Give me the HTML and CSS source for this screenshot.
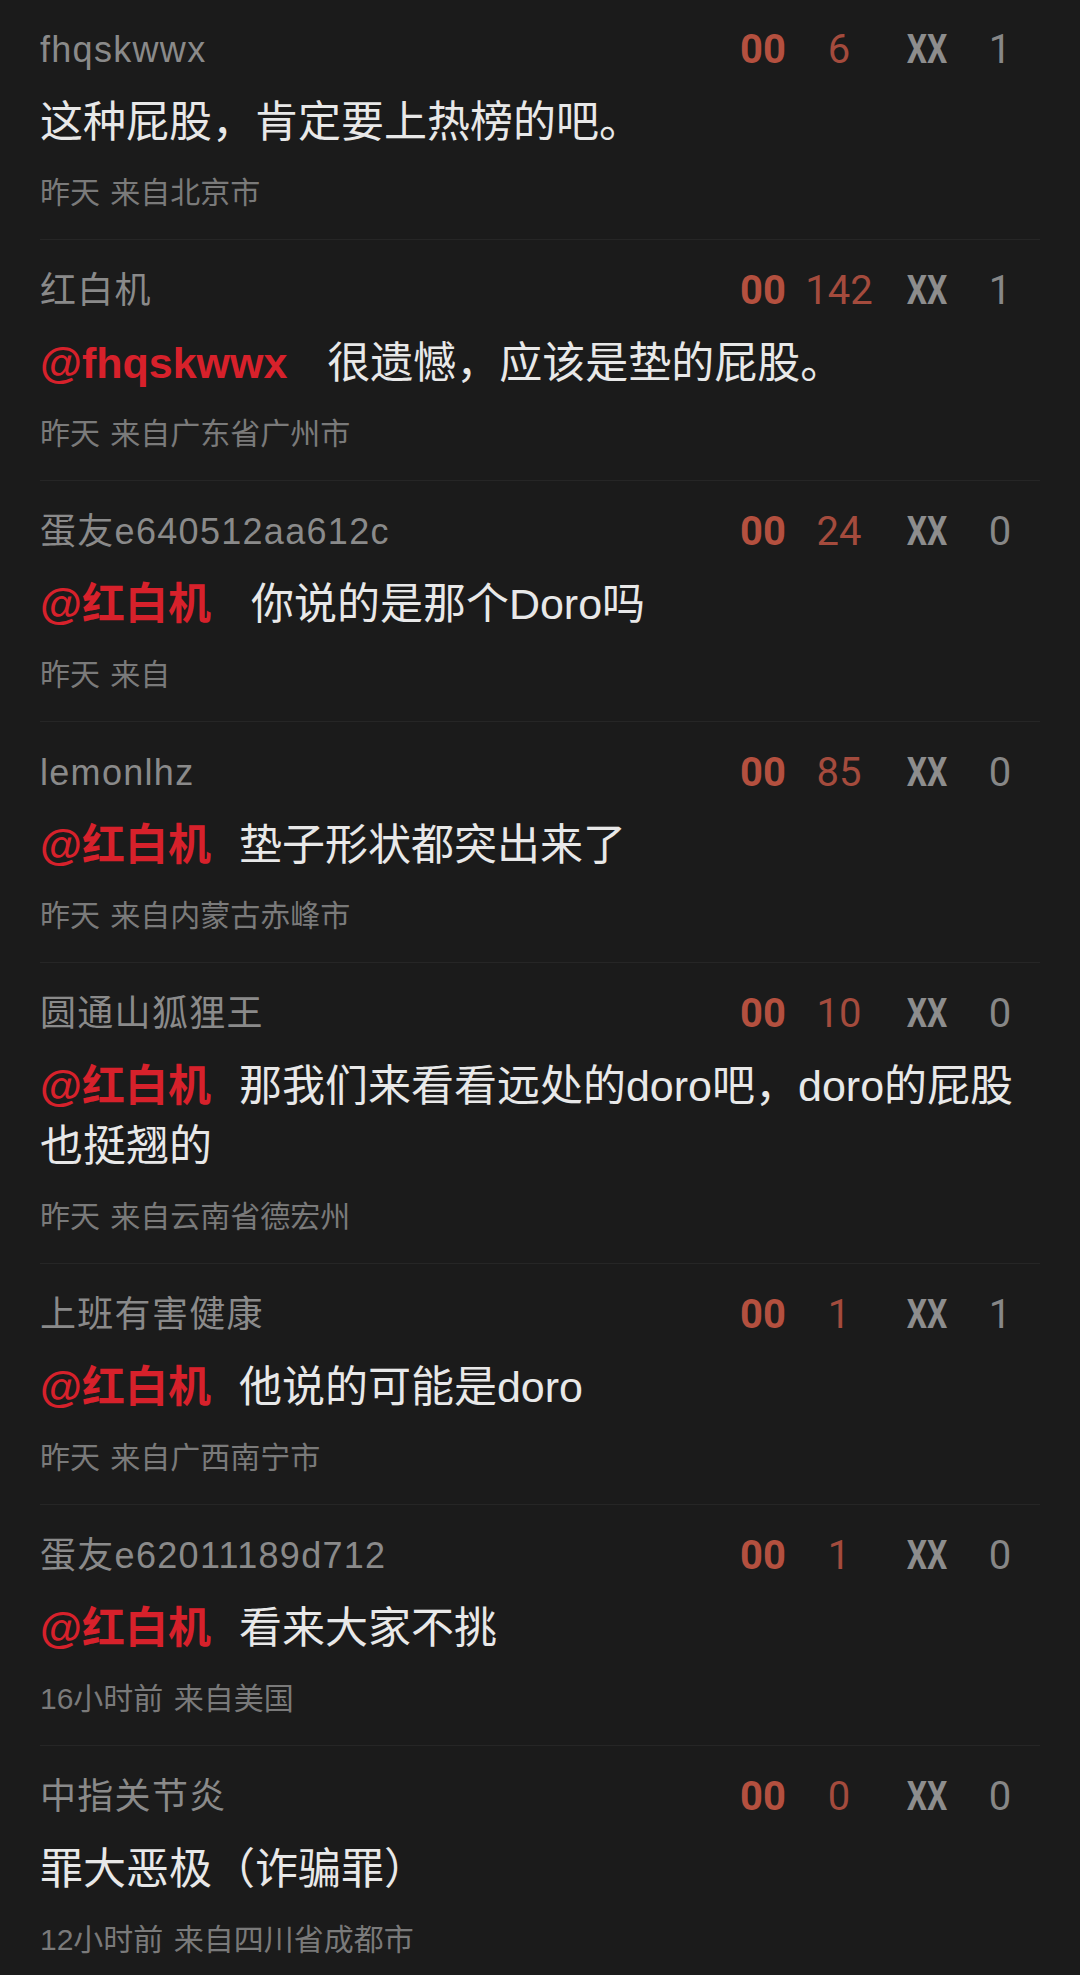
FILE: index.html
```html
<!DOCTYPE html>
<html lang="zh-CN">
<head>
<meta charset="utf-8">
<title>评论</title>
<link rel="stylesheet" href="styles.css">
</head>
<body>
<main class="list">
  <article class="comment">
    <div class="head">
      <span class="user">fhqskwwx</span>
      <div class="stats"><span class="oo">00</span><span class="up">6</span><span class="xx">XX</span><span class="down">1</span></div>
    </div>
    <p class="text">这种屁股，肯定要上热榜的吧。</p>
    <div class="meta">昨天 来自北京市</div>
  </article>
  <article class="comment">
    <div class="head">
      <span class="user">红白机</span>
      <div class="stats"><span class="oo">00</span><span class="up">142</span><span class="xx">XX</span><span class="down">1</span></div>
    </div>
    <p class="text"><span class="at">@fhqskwwx</span>&nbsp;很遗憾，应该是垫的屁股。</p>
    <div class="meta">昨天 来自广东省广州市</div>
  </article>
  <article class="comment">
    <div class="head">
      <span class="user">蛋友e640512aa612c</span>
      <div class="stats"><span class="oo">00</span><span class="up">24</span><span class="xx">XX</span><span class="down">0</span></div>
    </div>
    <p class="text"><span class="at">@红白机</span>&nbsp;你说的是那个Doro吗</p>
    <div class="meta">昨天 来自</div>
  </article>
  <article class="comment">
    <div class="head">
      <span class="user">lemonlhz</span>
      <div class="stats"><span class="oo">00</span><span class="up">85</span><span class="xx">XX</span><span class="down">0</span></div>
    </div>
    <p class="text"><span class="at">@红白机</span>垫子形状都突出来了</p>
    <div class="meta">昨天 来自内蒙古赤峰市</div>
  </article>
  <article class="comment">
    <div class="head">
      <span class="user">圆通山狐狸王</span>
      <div class="stats"><span class="oo">00</span><span class="up">10</span><span class="xx">XX</span><span class="down">0</span></div>
    </div>
    <p class="text"><span class="at">@红白机</span>那我们来看看远处的doro吧，doro的屁股<br>也挺翘的</p>
    <div class="meta">昨天 来自云南省德宏州</div>
  </article>
  <article class="comment">
    <div class="head">
      <span class="user">上班有害健康</span>
      <div class="stats"><span class="oo">00</span><span class="up">1</span><span class="xx">XX</span><span class="down">1</span></div>
    </div>
    <p class="text"><span class="at">@红白机</span>他说的可能是doro</p>
    <div class="meta">昨天 来自广西南宁市</div>
  </article>
  <article class="comment">
    <div class="head">
      <span class="user">蛋友e62011189d712</span>
      <div class="stats"><span class="oo">00</span><span class="up">1</span><span class="xx">XX</span><span class="down">0</span></div>
    </div>
    <p class="text"><span class="at">@红白机</span>看来大家不挑</p>
    <div class="meta">16小时前 来自美国</div>
  </article>
  <article class="comment">
    <div class="head">
      <span class="user">中指关节炎</span>
      <div class="stats"><span class="oo">00</span><span class="up">0</span><span class="xx">XX</span><span class="down">0</span></div>
    </div>
    <p class="text">罪大恶极（诈骗罪）</p>
    <div class="meta">12小时前 来自四川省成都市</div>
  </article>
</main>
</body>
</html>
```

FILE: styles.css
```css
html, body {
  margin: 0;
  padding: 0;
  background: #1b1b1b;
}

body {
  font-family: "Liberation Sans", "Noto Sans CJK SC", sans-serif;
  -webkit-font-smoothing: antialiased;
}

.list {
  padding: 0 40px;
  margin-top: -1px;
}

.comment {
  padding: 27px 0 26px;
  border-bottom: 1px solid #262626;
}

.comment:last-child {
  border-bottom: none;
}

.head {
  display: flex;
  align-items: center;
  justify-content: space-between;
  height: 48px;
}

.user {
  font-size: 36px;
  letter-spacing: 1.3px;
  color: #8a8a8a;
  line-height: 48px;
  white-space: nowrap;
}

.stats {
  display: flex;
  align-items: center;
  margin-right: 4px;
  font-family: Roboto, "Liberation Sans", sans-serif;
  font-size: 40px;
  line-height: 48px;
}

.stats span {
  display: block;
  text-align: center;
}

.oo {
  width: 50px;
  font-weight: 700;
  color: #b4503f;
}

.up {
  width: 102px;
  color: #a44b3d;
}

.xx {
  width: 74px;
  font-weight: 700;
  color: #8d8d8d;
  transform: scaleX(0.8);
}

.down {
  width: 72px;
  color: #878787;
}

.text {
  margin: 18px 0 0;
  font-size: 43px;
  line-height: 60px;
  color: #e8e8e8;
}

.at {
  color: #d7212b;
  font-weight: 700;
  margin-right: 28px;
}

.meta {
  margin-top: 21px;
  font-size: 30px;
  line-height: 40px;
  word-spacing: 2px;
  color: #7a7a7a;
}
```
